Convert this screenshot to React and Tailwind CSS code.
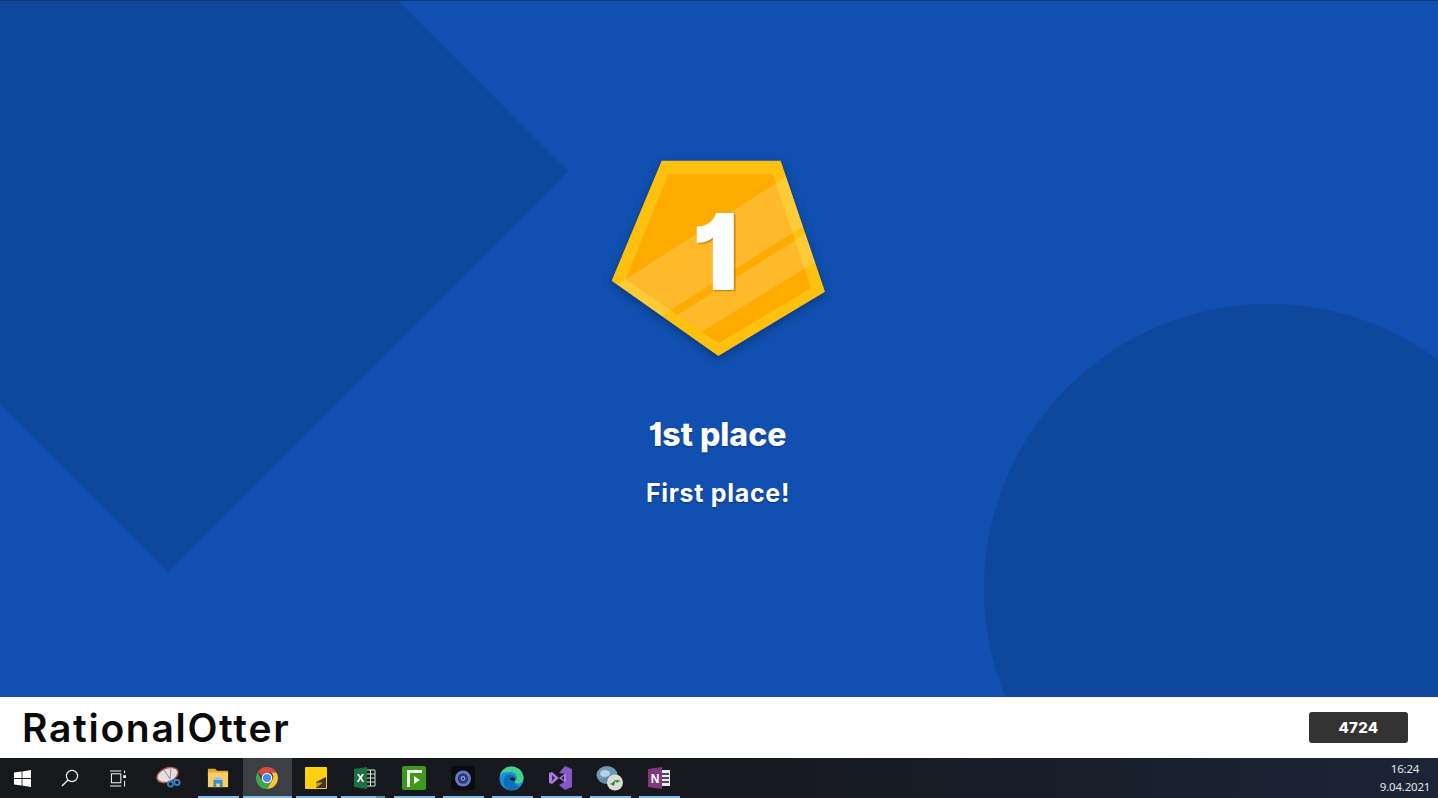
// App.jsx
const WinIcon = () => (
  <svg width="17" height="17" viewBox="0 0 17 17" fill="#fff">
    <path d="M0 2.6 7.6 1.5v6.6H0zM8.4 1.4 17 0v8.1H8.4zM0 8.9h7.6v6.6L0 14.4zM8.4 8.9H17V17l-8.6-1.4z" />
  </svg>
);

const SearchIcon = () => (
  <svg width="18" height="18" viewBox="0 0 18 18" fill="none" stroke="#f2f2f2" strokeWidth="1.2">
    <circle cx="11" cy="7" r="5.6" />
    <path d="M7 11 1 17" strokeWidth="1.4" />
  </svg>
);

const TaskViewIcon = () => (
  <svg width="16" height="17" viewBox="0 0 17 17" fill="none" stroke="#f2f2f2" strokeWidth="1.1">
    <path d="M0 .6h12M0 16.4h12" />
    <rect x="1.5" y="3.5" width="10" height="9.5" />
    <path d="M15.5 0v3M15.5 11v6" />
    <rect x="14" y="5" width="3" height="3" fill="#f2f2f2" stroke="none" />
  </svg>
);

const SnipIcon = () => (
  <svg width="26" height="26" viewBox="0 0 26 26" fill="none">
    <ellipse cx="11.5" cy="10" rx="11" ry="6.8" transform="rotate(-22 11.5 10)" fill="#e9dede" stroke="#a9565f" strokeWidth="1.4" />
    <path d="M8 5l6 9M15 3.500l-1 10" stroke="#8a8f99" strokeWidth="1" />
    <circle cx="14.500" cy="19" r="2.600" stroke="#2f86c9" strokeWidth="1.800" />
    <circle cx="21" cy="17.500" r="2.600" stroke="#2f86c9" strokeWidth="1.800" />
    <path d="M15 15l1 2M19 13.500l-1 3" stroke="#2f86c9" strokeWidth="1.400" />
  </svg>
);

const FolderIcon = () => (
  <svg width="22" height="22" viewBox="0 0 24 24">
    <path d="M1 2h8l2 2h12v5H1z" fill="#e0a92f" />
    <path d="M1 6h22v16H1z" fill="#f8cf62" />
    <path d="M7 14h10v8h-3v-4h-4v4H7z" fill="#3f8fd0" />
    <path d="M9 11h6v3H9z" fill="#8cc4ee" />
  </svg>
);

const ChromeIcon = () => (
  <svg width="24" height="24" viewBox="0 0 24 24">
    <path d="M12 1a11 11 0 0 1 9.500 5.500H12A5.500 5.500 0 0 0 7 9.600L2.600 6.300A11 11 0 0 1 12 1z" fill="#dd4b3e" />
    <path d="M21.500 6.500A11 11 0 0 1 12 23l4.800-8.200A5.500 5.500 0 0 0 16 6.500z" fill="#fbc633" />
    <path d="M2.600 6.300 7.200 14.700a5.500 5.500 0 0 0 9.600.1L12 23A11 11 0 0 1 2.600 6.300z" fill="#3fa650" />
    <circle cx="12" cy="12" r="5.300" fill="#fff" />
    <circle cx="12" cy="12" r="4.100" fill="#4a88ee" />
  </svg>
);

const StickyIcon = () => (
  <svg width="22" height="22" viewBox="0 0 22 22">
    <rect width="22" height="22" rx="1" fill="#ffd00f" />
    <path d="M11 15 21 10V21H11z" fill="#3a3526" />
    <path d="M11 21V15.500h7z" fill="#c99d18" />
  </svg>
);

const ExcelIcon = () => (
  <svg width="24" height="24" viewBox="0 0 24 24">
    <path d="M13 4h9v16h-9z" fill="#16191c" stroke="#cfe6d8" strokeWidth="1" />
    <path d="M14 8h8M14 12h8M14 16h8M17.500 4v16" stroke="#cfe6d8" strokeWidth="1" />
    <path d="M1 3l13-2v22L1 21z" fill="#1d7044" />
    <text x="7.300" y="16" textAnchor="middle" fontSize="11" fontWeight="700" fill="#fff" fontFamily="'Liberation Sans', sans-serif">X</text>
  </svg>
);

const GreenAppIcon = () => (
  <svg width="24" height="24" viewBox="0 0 24 24">
    <rect width="24" height="24" rx="2" fill="#3c9a18" />
    <path d="M5 21V4h15v3H8v14z" fill="#fff" />
    <path d="M12 10v8l6-4z" fill="#fff" />
  </svg>
);

const CameraIcon = () => (
  <svg width="24" height="24" viewBox="0 0 24 24">
    <rect width="24" height="24" rx="3" fill="#0c0c0f" />
    <circle cx="12" cy="12.500" r="8" fill="#6479cc" />
    <circle cx="12" cy="12.500" r="5.200" fill="#2c3a70" />
    <circle cx="12" cy="12.500" r="2.400" fill="#8599e2" />
    <circle cx="12" cy="12.500" r="1" fill="#10152e" />
  </svg>
);

const EdgeIcon = () => (
  <svg width="25" height="25" viewBox="0 0 25 25">
    <circle cx="12.500" cy="12.500" r="12" fill="#1a8fd6" />
    <path d="M1 9C3 3 8 .5 12.500.5 19 .5 24.500 5.500 24.500 12c0 3.500-2.500 5.500-5.500 5.500-2.500 0-4.500-1-5-2.500 3 .5 4-1 4-3 0-3.500-3-6-6.500-6C6 6 2.500 7 1 9z" fill="#43d08f" />
    <path d="M6 11c2-3 6-3 9-1 2.500 1.500 2 4 .5 4.500C15.500 17.500 17 20 20 20c-3 4-8 5-11 3C4 20 3.500 14 6 11z" fill="#0f6cb8" />
    <path d="M13 11.500c2 0 3.500 1 3 3-2 .5-4.500 0-5-1.500 0-1 1-1.500 2-1.500z" fill="#1a1a1c" />
  </svg>
);

const VsIcon = () => (
  <svg width="26" height="26" viewBox="0 0 26 26">
    <path d="M17 1l7 3v18l-7 3-6-5 7-4V9l-7-1z" fill="#8458c6" />
    <path d="M1 8l3-1 7 6-7 6-3-1z" fill="#a57ce0" />
    <path d="M4 10v6l3-3z" fill="#3a2a58" />
    <path d="M11 13 18 8v10z" fill="#a57ce0" />
    <path d="M13.500 13 16 11v4z" fill="#1a1a1c" />
  </svg>
);

const RemoteIcon = () => (
  <svg width="28" height="28" viewBox="0 0 28 28">
    <ellipse cx="11" cy="11" rx="10.500" ry="9" fill="#6d96b8" />
    <ellipse cx="9" cy="9.500" rx="5" ry="3.500" fill="#b7d0e2" />
    <path d="M3 15c4 1 7 0 9-3 3 2 5 2 8 1-1 4-5 6-9 6s-6-2-8-4z" fill="#5d89ad" />
    <circle cx="19" cy="18.500" r="8" fill="#dcdcd6" />
    <path d="M14.500 20h3l-1-1.500M23.500 17h-3l1 1.500M17 21.500l2-5" stroke="#1f8a3a" strokeWidth="1.400" fill="none" />
  </svg>
);

const OneNoteIcon = () => (
  <svg width="24" height="24" viewBox="0 0 24 24">
    <path d="M14 4h9v16h-9z" fill="#e9e6ee" />
    <path d="M15 8h7M15 12h7M15 16h7" stroke="#17181c" strokeWidth="1.300" />
    <path d="M1 3l14-2v22L1 21z" fill="#80397b" />
    <text x="8" y="16.500" textAnchor="middle" fontSize="12" fontWeight="700" fill="#fff" fontFamily="'Liberation Sans', sans-serif">N</text>
  </svg>
);

const apps = [
  { icon: <SnipIcon /> },
  { icon: <FolderIcon />, running: true },
  { icon: <ChromeIcon />, running: true, active: true },
  { icon: <StickyIcon />, running: true },
  { icon: <ExcelIcon />, running: true, split: true },
  { icon: <GreenAppIcon />, running: true },
  { icon: <CameraIcon />, running: true },
  { icon: <EdgeIcon />, running: true },
  { icon: <VsIcon />, running: true },
  { icon: <RemoteIcon />, running: true },
  { icon: <OneNoteIcon />, running: true },
];

function Medal() {
  return (
    <svg width="260" height="225" viewBox="0 0 780 675" className="ml-[2px] shrink-0 drop-shadow-[0_3px_5px_rgba(0,0,0,0.3)]">
      <defs>
        <clipPath id="medal-clip">
          <path d="M215 47H572L705 440 385 633 65 407z" />
        </clipPath>
      </defs>
      <path d="M215 47H572L705 440 385 633 65 407z" fill="#ffc10f" />
      <path d="M235 87H548L663 430 385 595 107 403z" fill="#ffab00" />
      <g clipPath="url(#medal-clip)" fill="#fff" fillOpacity="0.17">
        <path d="M760 -14 25 455 205 519 760 167z" />
        <path d="M760 193 262 510 335 560 760 300z" />
      </g>
      <text
        x="376"
        y="435"
        textAnchor="middle"
        fontSize="318"
        fontWeight="900"
        fill="#fff"
        fontFamily="Inter, sans-serif"
        className="[font-feature-settings:'cv01'] [filter:drop-shadow(5px_4px_0_rgba(170,100,0,0.55))]"
      >
        1
      </text>
    </svg>
  );
}

export default function App() {
  return (
    <div className="flex h-screen w-full flex-col overflow-hidden bg-white font-['Inter',sans-serif]">
      <div className="h-px shrink-0 bg-[#0d3a72]" />

      <main className="relative flex min-h-0 flex-1 flex-col items-center overflow-hidden bg-[#1150b0] pt-[144px]">
        <div className="absolute left-[-115px] top-[-113px] h-[566px] w-[566px] rotate-45 bg-[#0f479c]" />
        <div className="absolute left-[984px] top-[303px] h-[570px] w-[570px] rounded-full bg-[#0f479c]" />

        <div className="relative flex flex-col items-center">
          <Medal />
          <h1 className="mr-[3px] mt-[45px] text-[32px] font-extrabold leading-10 text-white [font-feature-settings:'cv01'] [text-shadow:0_1px_2px_rgba(0,0,0,0.35)]">
            1st place
          </h1>
          <p className="mr-[2px] mt-[22px] text-[25px] font-bold leading-8 tracking-[0.7px] text-white [text-shadow:0_1px_2px_rgba(0,0,0,0.35)]">
            First place!
          </p>
        </div>
      </main>

      <div className="flex h-[61px] shrink-0 items-center justify-between bg-white pl-[22px] pr-[30px]">
        <span className="text-[39px] font-semibold leading-none tracking-[1.7px] text-[#0a0a0a]">RationalOtter</span>
        <span className="flex h-[31px] w-[99px] items-center justify-center rounded-[3px] bg-[#333333] pt-[1px] text-[15px] font-extrabold tracking-[0.3px] text-white">
          4724
        </span>
      </div>

      <footer className="flex h-10 shrink-0 items-stretch bg-gradient-to-r from-[#17181c] via-[#17191f] to-[#1a2536]">
        <div className="flex w-11 items-center justify-center"><WinIcon /></div>
        <div className="ml-[2px] flex w-12 items-center justify-center"><SearchIcon /></div>
        <div className="flex w-12 items-center justify-center"><TaskViewIcon /></div>

        <div className="ml-[3px] flex">
          {apps.map((app, i) => (
            <div
              key={i}
              className={`relative flex w-[49px] items-center justify-center pr-[2px] ${app.active ? 'bg-[#3c3f44]' : ''}`}
            >
              {app.icon}
              {app.running && !app.split && (
                <div className={`absolute bottom-0 h-[2px] bg-[#7cbcea] ${app.active ? 'inset-x-0' : 'inset-x-1'}`} />
              )}
              {app.split && (
                <div className="absolute inset-x-0 bottom-0 flex h-[2px]">
                  <div className="w-[35px] bg-[#7cbcea]" />
                  <div className="w-[9px] bg-[#5b8fb5]" />
                </div>
              )}
            </div>
          ))}
        </div>

        <div className="ml-auto mr-[4px] flex w-[58px] flex-col items-center justify-center gap-[3px] pb-[2px] font-['Noto_Sans',sans-serif] text-[11.5px] leading-[15px] tracking-[-0.2px] text-[#e4e6e8]">
          <span>16:24</span>
          <span>9.04.2021</span>
        </div>
      </footer>
    </div>
  );
}
